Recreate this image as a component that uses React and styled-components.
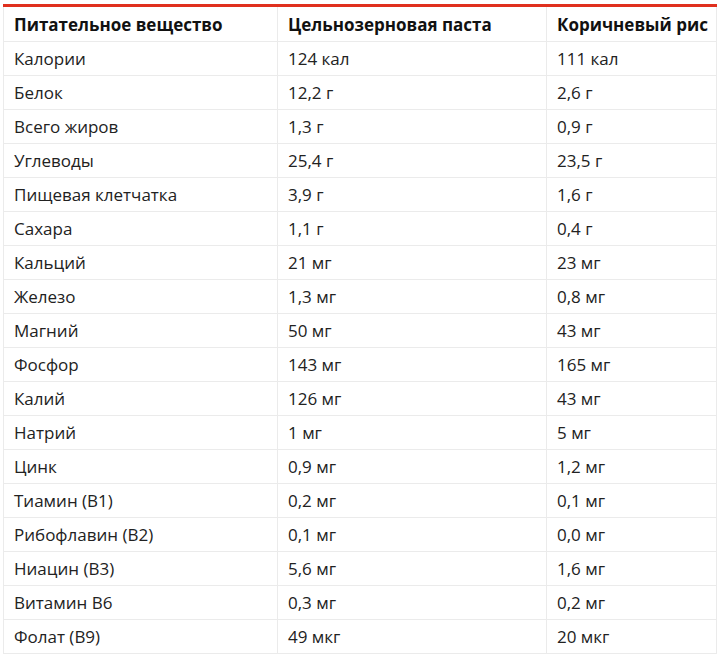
import React from 'react';
import styled, { createGlobalStyle } from 'styled-components';

const GlobalStyle = createGlobalStyle`
  body {
    margin: 0;
    background: #ffffff;
    font-family: "Open Sans", "Liberation Sans", sans-serif;
  }
`;

const Page = styled.div`
  padding: 4px 1px 0 3px;
`;

const Table = styled.table`
  width: 713px;
  border-collapse: collapse;
  font-size: 17px;
  color: #222222;
  table-layout: fixed;
`;

const Col = styled.col`
  width: ${props => props.w}px;
`;

const Cell = styled.td`
  height: ${props => (props.head ? 34 : 33)}px;
  padding: 0 10px;
  border: 1px solid #ebebeb;
  border-top: ${props => (props.head ? '3px solid #e0301e' : 'none')};
  vertical-align: middle;
  white-space: nowrap;
  text-align: left;
  font-weight: ${props => (props.head ? 700 : 400)};
  color: ${props => (props.head ? '#111111' : '#222222')};
`;

const rows = [
  ['Калории', '124 кал', '111 кал'],
  ['Белок', '12,2 г', '2,6 г'],
  ['Всего жиров', '1,3 г', '0,9 г'],
  ['Углеводы', '25,4 г', '23,5 г'],
  ['Пищевая клетчатка', '3,9 г', '1,6 г'],
  ['Сахара', '1,1 г', '0,4 г'],
  ['Кальций', '21 мг', '23 мг'],
  ['Железо', '1,3 мг', '0,8 мг'],
  ['Магний', '50 мг', '43 мг'],
  ['Фосфор', '143 мг', '165 мг'],
  ['Калий', '126 мг', '43 мг'],
  ['Натрий', '1 мг', '5 мг'],
  ['Цинк', '0,9 мг', '1,2 мг'],
  ['Тиамин (B1)', '0,2 мг', '0,1 мг'],
  ['Рибофлавин (B2)', '0,1 мг', '0,0 мг'],
  ['Ниацин (B3)', '5,6 мг', '1,6 мг'],
  ['Витамин B6', '0,3 мг', '0,2 мг'],
  ['Фолат (B9)', '49 мкг', '20 мкг'],
];

export default function App() {
  return (
    <>
      <GlobalStyle />
      <Page>
        <Table>
          <colgroup>
            <Col w={274} />
            <Col w={269} />
            <Col w={170} />
          </colgroup>
          <thead>
            <tr>
              <Cell as="th" head>Питательное вещество</Cell>
              <Cell as="th" head>Цельнозерновая паста</Cell>
              <Cell as="th" head>Коричневый рис</Cell>
            </tr>
          </thead>
          <tbody>
            {rows.map(r => (
              <tr key={r[0]}>
                {r.map((c, i) => (
                  <Cell key={i}>{c}</Cell>
                ))}
              </tr>
            ))}
          </tbody>
        </Table>
      </Page>
    </>
  );
}
